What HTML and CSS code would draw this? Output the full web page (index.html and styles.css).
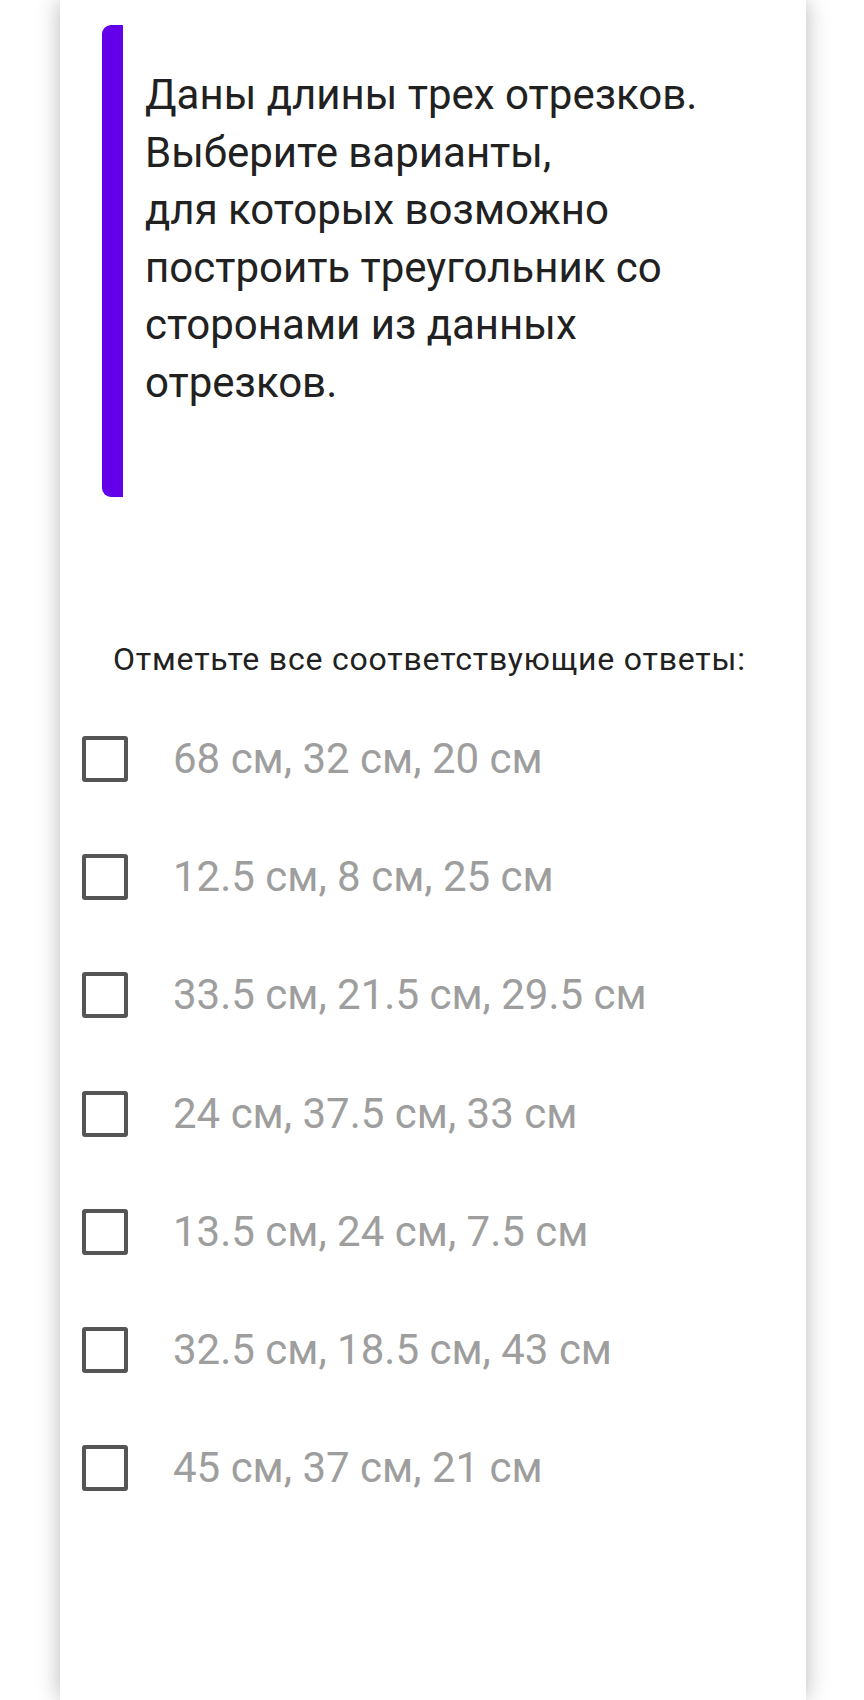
FILE: index.html
```html
<!DOCTYPE html>
<html lang="ru">
<head>
<meta charset="utf-8">
<link rel="stylesheet" href="styles.css">
</head>
<body>
<div class="card">
  <div class="question">
    <p class="question-text">Даны длины трех отрезков.<br>Выберите варианты,<br>для которых возможно<br>построить треугольник со<br>сторонами из данных<br>отрезков.</p>
  </div>
  <div class="hint">Отметьте все соответствующие ответы:</div>
  <ul class="options">
    <li class="option"><span class="box"></span><span class="label">68 см, 32 см, 20 см</span></li>
    <li class="option"><span class="box"></span><span class="label">12.5 см, 8 см, 25 см</span></li>
    <li class="option"><span class="box"></span><span class="label">33.5 см, 21.5 см, 29.5 см</span></li>
    <li class="option"><span class="box"></span><span class="label">24 см, 37.5 см, 33 см</span></li>
    <li class="option"><span class="box"></span><span class="label">13.5 см, 24 см, 7.5 см</span></li>
    <li class="option"><span class="box"></span><span class="label">32.5 см, 18.5 см, 43 см</span></li>
    <li class="option"><span class="box"></span><span class="label">45 см, 37 см, 21 см</span></li>
  </ul>
</div>
</body>
</html>
```

FILE: styles.css
```css
html, body {
  margin: 0;
  padding: 0;
  background: #ffffff;
  font-family: Roboto, "Noto Sans", sans-serif;
}

body {
  height: 1700px;
  overflow: hidden;
}

.card {
  margin-left: 60px;
  width: 746px;
  height: 1700px;
  background: #ffffff;
  box-shadow: 0 0 22px rgba(0, 0, 0, 0.28);
  padding-top: 25px;
  box-sizing: border-box;
}

.question {
  margin-left: 42px;
  width: 640px;
  height: 472px;
  border-left: 21px solid #6200ea;
  border-radius: 9px 0 0 9px;
  box-sizing: border-box;
  padding: 41px 0 0 22px;
}

.question-text {
  margin: 0;
  font-size: 42px;
  line-height: 57.6px;
  color: #212121;
  white-space: nowrap;
}

.hint {
  margin-top: 142px;
  padding-left: 53px;
  font-size: 32px;
  line-height: 40px;
  color: #212121;
  letter-spacing: 0.8px;
}

.options {
  list-style: none;
  margin: 21px 0 0 0;
  padding: 0;
}

.option {
  display: flex;
  align-items: center;
  height: 118.2px;
  padding-left: 22px;
}

.box {
  width: 46px;
  height: 46px;
  box-sizing: border-box;
  border: 4px solid #555555;
  border-radius: 3px;
  flex: none;
}

.label {
  margin-left: 45px;
  font-size: 42px;
  color: #9e9e9e;
  line-height: 50px;
}
```
